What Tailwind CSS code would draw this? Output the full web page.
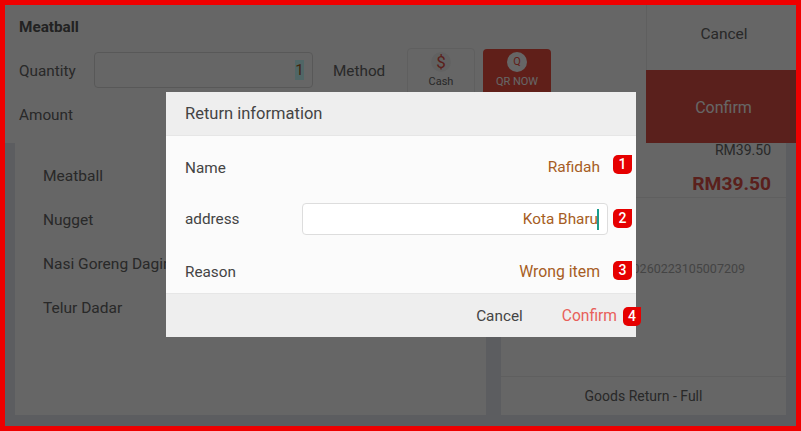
<!DOCTYPE html>
<html lang="en">
<head>
    <meta charset="UTF-8">
    <title>Return information</title>
    <script src="https://cdn.jsdelivr.net/npm/@tailwindcss/browser@4"></script>
</head>
<body class="font-['Roboto',sans-serif] text-[15.3px] text-[#666]">
    <div class="relative w-[801px] h-[431px] border-[5px] border-[#ee0000] bg-[#e6e9f0] flex flex-col overflow-hidden">
        <!-- top bar -->
        <div class="flex h-[138px] bg-white shrink-0">
            <div class="flex-1 pl-[14px] pt-[13px]">
                <div class="h-[18px] leading-[18px] font-bold text-[#555]">Meatball</div>
                <div class="flex items-start mt-[12px] h-[50px]">
                    <div class="w-[75px] mt-[13px] leading-[20px]">Quantity</div>
                    <div class="w-[219px] h-[36px] mt-[4px] border border-[#ddd] rounded flex items-center justify-end pr-[8px]">
                        <span class="bg-[#c8ffff] text-[#a65d24] w-[9px] text-center leading-[20px]">1</span>
                    </div>
                    <div class="w-[94px] pl-[20px] mt-[13px] leading-[20px]">Method</div>
                    <div class="w-[68px] h-[50px] border border-[#eee] rounded-sm flex flex-col items-center pt-[3px]">
                        <span class="w-[20px] h-[20px] rounded-full bg-[#f3f3f3] text-[#e15046] text-[17px] leading-[20px] text-center">$</span>
                        <span class="text-[11px] leading-[14px] mt-[3px]">Cash</span>
                    </div>
                    <div class="w-[68px] h-[50px] ml-[8px] mt-[1px] bg-[#f04e40] rounded-sm flex flex-col items-center pt-[3px]">
                        <span class="w-[20px] h-[20px] rounded-full bg-white text-[#f04e40] text-[11px] leading-[20px] text-center">Q</span>
                        <span class="text-[11px] leading-[14px] mt-[3px] text-white">QR NOW</span>
                    </div>
                </div>
                <div class="mt-[7px] leading-[20px]">Amount</div>
            </div>
            <div class="w-[150px] flex flex-col border-l border-[#eee]">
                <div class="h-[65px] flex items-center justify-center pb-[5px] pl-[5px] text-[15.5px]">Cancel</div>
                <div class="h-[73px] -ml-px bg-[#e15046] text-white flex items-center justify-center pl-[5px] pt-[2px] text-[16px]">Confirm</div>
            </div>
        </div>
        <!-- list and summary -->
        <div class="flex-1 flex gap-[15px] px-[10px] pb-[11px]">
            <div class="w-[471px] bg-white pt-[12px] pl-[28px] text-[15.5px]">
                <div class="h-[44px] flex items-center">Meatball</div>
                <div class="h-[44px] flex items-center">Nugget</div>
                <div class="h-[44px] flex items-center">Nasi Goreng Daging</div>
                <div class="h-[44px] flex items-center">Telur Dadar</div>
            </div>
            <div class="flex-1 bg-white flex flex-col">
                <div class="h-[55px] border-b border-[#eee] pr-[15px] flex flex-col items-end">
                    <div class="text-[14px] leading-[14px]">RM39.50</div>
                    <div class="mt-[15px] text-[19.2px] leading-[24px] font-bold text-[#e15046]">RM39.50</div>
                </div>
                <div class="flex-1 flex items-center justify-end pr-[41px] pb-[36px] text-[12.5px] text-[#aaa]">0260223105007209</div>
                <div class="h-[39px] border-t border-[#eee] flex items-center justify-center text-[14px]">Goods Return - Full</div>
            </div>
        </div>
        <div class="absolute inset-0 bg-black/60"></div>
        <!-- dialog -->
        <div class="absolute left-[161px] top-[87px] w-[470px] h-[245px] bg-[#fbfbfb] flex flex-col text-[#444]">
            <div class="h-[44px] bg-[#eee] border-b border-[#e6e6e6] flex items-center px-[19px] pt-[2px] text-[16.5px]">Return information</div>
            <div class="flex-1 flex flex-col gap-[8px] pt-[9px] pl-[19px] pr-[36px]">
                <div class="h-[44px] flex items-center justify-between pt-[2px]">
                    <span>Name</span>
                    <span class="text-[15.5px] text-[#a65d24]">Rafidah</span>
                </div>
                <div class="h-[44px] flex items-center justify-between">
                    <span>address</span>
                    <div class="w-[306px] h-[32px] -mr-[8px] bg-white border border-[#ddd] rounded flex items-center justify-end pr-[8px] text-[#a65d24]">
                        <span>Kota Bharu</span><span class="w-[2px] h-[21px] -ml-px bg-[#1a9c8c]"></span>
                    </div>
                </div>
                <div class="h-[44px] flex items-center justify-between pt-[2px]">
                    <span>Reason</span>
                    <span class="text-[15.8px] text-[#a65d24]">Wrong item</span>
                </div>
            </div>
            <div class="h-[44px] bg-[#eee] border-t border-[#e6e6e6] flex items-center justify-end gap-[39px] pr-[19px] pt-[2px]">
                <span>Cancel</span>
                <span class="text-[15.6px] text-[#e8605a]">Confirm</span>
            </div>
        </div>
        <!-- step badges -->
        <div class="absolute left-[608px] top-[150px] w-[19px] h-[19px] bg-[#e60000] text-white text-[14px] font-medium rounded-[5px] rounded-tr-none flex items-center justify-center">1</div>
        <div class="absolute left-[608px] top-[204px] w-[19px] h-[19px] bg-[#e60000] text-white text-[14px] font-medium rounded-[5px] rounded-tr-none flex items-center justify-center">2</div>
        <div class="absolute left-[608px] top-[256px] w-[19px] h-[19px] bg-[#e60000] text-white text-[14px] font-medium rounded-[5px] rounded-tr-none flex items-center justify-center">3</div>
        <div class="absolute left-[618px] top-[302px] w-[18px] h-[19px] bg-[#e60000] text-white text-[14px] font-medium rounded-[5px] rounded-tr-none flex items-center justify-center">4</div>
    </div>
</body>
</html>
